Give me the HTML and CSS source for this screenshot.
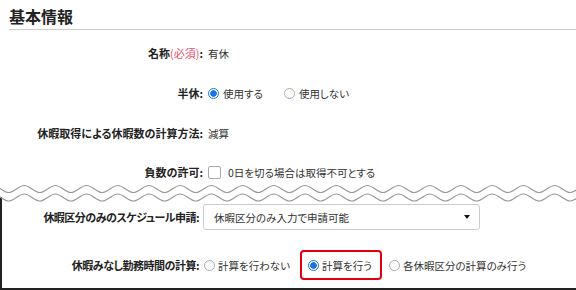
FILE: index.html
```html
<!DOCTYPE html>
<html lang="ja">
<head>
  <meta charset="UTF-8">
  <title>基本情報</title>
  <link rel="stylesheet" href="styles.css">
</head>
<body>

<h2 class="title">基本情報</h2>

<div class="rows">
  <div class="row">
    <div class="label">名称<span class="req">(必須)</span>:</div>
    <div class="value">有休</div>
  </div>

  <div class="row">
    <div class="label">半休:</div>
    <div class="value">
      <label class="opt"><input type="radio" name="half" checked>使用する</label>
      <label class="opt"><input type="radio" name="half">使用しない</label>
    </div>
  </div>

  <div class="row">
    <div class="label">休暇取得による休暇数の計算方法:</div>
    <div class="value">減算</div>
  </div>

  <div class="row row-cut">
    <div class="label">負数の許可:</div>
    <div class="value">
      <label class="opt check"><input type="checkbox">0日を切る場合は取得不可とする</label>
    </div>
  </div>
</div>

<svg class="wave" width="576" height="14" viewBox="0 0 576 14">
  <path d="M-7 2.5 c5.7 0 9.9 7 15.6 7 s9.9 -7 15.6 -7 s9.9 7 15.6 7 s9.9 -7 15.6 -7 s9.9 7 15.6 7 s9.9 -7 15.6 -7 s9.9 7 15.6 7 s9.9 -7 15.6 -7 s9.9 7 15.6 7 s9.9 -7 15.6 -7 s9.9 7 15.6 7 s9.9 -7 15.6 -7 s9.9 7 15.6 7 s9.9 -7 15.6 -7 s9.9 7 15.6 7 s9.9 -7 15.6 -7 s9.9 7 15.6 7 s9.9 -7 15.6 -7 s9.9 7 15.6 7 s9.9 -7 15.6 -7 s9.9 7 15.6 7 s9.9 -7 15.6 -7 s9.9 7 15.6 7 s9.9 -7 15.6 -7 s9.9 7 15.6 7 s9.9 -7 15.6 -7 s9.9 7 15.6 7 s9.9 -7 15.6 -7 s9.9 7 15.6 7 s9.9 -7 15.6 -7 s9.9 7 15.6 7 s9.9 -7 15.6 -7 s9.9 7 15.6 7 s9.9 -7 15.6 -7 s9.9 7 15.6 7 s9.9 -7 15.6 -7 s9.9 7 15.6 7 s9.9 -7 15.6 -7" />
  <path d="M-7 11 c5.7 0 9.9 7 15.6 7 s9.9 -7 15.6 -7 s9.9 7 15.6 7 s9.9 -7 15.6 -7 s9.9 7 15.6 7 s9.9 -7 15.6 -7 s9.9 7 15.6 7 s9.9 -7 15.6 -7 s9.9 7 15.6 7 s9.9 -7 15.6 -7 s9.9 7 15.6 7 s9.9 -7 15.6 -7 s9.9 7 15.6 7 s9.9 -7 15.6 -7 s9.9 7 15.6 7 s9.9 -7 15.6 -7 s9.9 7 15.6 7 s9.9 -7 15.6 -7 s9.9 7 15.6 7 s9.9 -7 15.6 -7 s9.9 7 15.6 7 s9.9 -7 15.6 -7 s9.9 7 15.6 7 s9.9 -7 15.6 -7 s9.9 7 15.6 7 s9.9 -7 15.6 -7 s9.9 7 15.6 7 s9.9 -7 15.6 -7 s9.9 7 15.6 7 s9.9 -7 15.6 -7 s9.9 7 15.6 7 s9.9 -7 15.6 -7 s9.9 7 15.6 7 s9.9 -7 15.6 -7 s9.9 7 15.6 7 s9.9 -7 15.6 -7 s9.9 7 15.6 7 s9.9 -7 15.6 -7" />
</svg>

<div class="box">
  <div class="row row-select">
    <div class="label">休暇区分のみのスケジュール申請:</div>
    <div class="value">
      <div class="select">
        <span>休暇区分のみ入力で申請可能</span>
        <span class="arrow"></span>
      </div>
    </div>
  </div>

  <div class="row row-calc">
    <div class="label">休暇みなし勤務時間の計算:</div>
    <div class="value">
      <label class="opt"><input type="radio" name="calc">計算を行わない</label>
      <label class="opt marked"><input type="radio" name="calc" checked>計算を行う</label>
      <label class="opt"><input type="radio" name="calc">各休暇区分の計算のみ行う</label>
    </div>
  </div>
</div>

</body>
</html>
```

FILE: styles.css
```css
body {
  font-family: "Noto Sans CJK JP", "Noto Sans", sans-serif;
  font-feature-settings: "palt";
  color: #333;
  background: #fff;
  margin: 0;
  padding: 0;
}
.title {
  margin: 0 0 0 9px;
  padding: 4px 0 1px;
  font-size: 16px;
  line-height: 24px;
  font-weight: bold;
  color: #222;
  border-bottom: 1px solid #ccc;
}
.rows {
  margin-top: 3px;
}
.row {
  display: grid;
  grid-template-columns: 203px 1fr;
  column-gap: 5px;
  align-items: center;
  height: 40px;
}
.row-cut {
  height: 22px;
  padding-top: 8px;
}
.label {
  text-align: right;
  font-size: 11px;
  font-weight: bold;
  color: #222;
  white-space: nowrap;
}
.req {
  color: #e5506a;
  font-weight: normal;
}
.value {
  display: flex;
  align-items: center;
  font-size: 10.5px;
  color: #333;
  white-space: nowrap;
}
.opt {
  display: inline-flex;
  align-items: center;
  gap: 4px;
  margin-right: 21px;
}
.opt input {
  margin: 0;
}
input[type="radio"] {
  appearance: none;
  width: 11px;
  height: 11px;
  border: 1px solid #aaa;
  border-radius: 50%;
  background: #fff;
}
input[type="radio"]:checked {
  border-color: #1a73e8;
  background: radial-gradient(circle, #1a73e8 0 3px, #fff 3.5px);
}
.check {
  gap: 7px;
}
input[type="checkbox"] {
  appearance: none;
  width: 13px;
  height: 13px;
  border: 1px solid #aaa;
  border-radius: 2px;
  background: #fff;
}
.wave {
  display: block;
  overflow: visible;
}
.wave path {
  fill: none;
  stroke: #999;
  stroke-width: 1.2;
}
.box {
  border-left: 2px solid #222;
  border-bottom: 2px solid #222;
  padding: 4px 0 7px;
  display: flex;
  flex-direction: column;
  gap: 16px;
}
.box .row {
  grid-template-columns: 197px 1fr;
  column-gap: 5px;
  height: 32px;
}
.box .label {
  letter-spacing: -0.5px;
}
.select {
  display: flex;
  align-items: center;
  justify-content: space-between;
  width: 256px;
  height: 24px;
  padding: 0 9px 0 10px;
  border: 1px solid #ccc;
  border-radius: 3px;
  margin-left: -1px;
}
.arrow {
  width: 0;
  height: 0;
  border-left: 3.5px solid transparent;
  border-right: 3.5px solid transparent;
  border-top: 4px solid #111;
}
.row-calc .opt {
  gap: 3px;
  margin-right: 10px;
}
.marked {
  height: 26px;
  padding: 0 8px 0 6px;
  border: 2px solid #e3000f;
  border-radius: 4px;
  margin-right: 7px !important;
}
```
